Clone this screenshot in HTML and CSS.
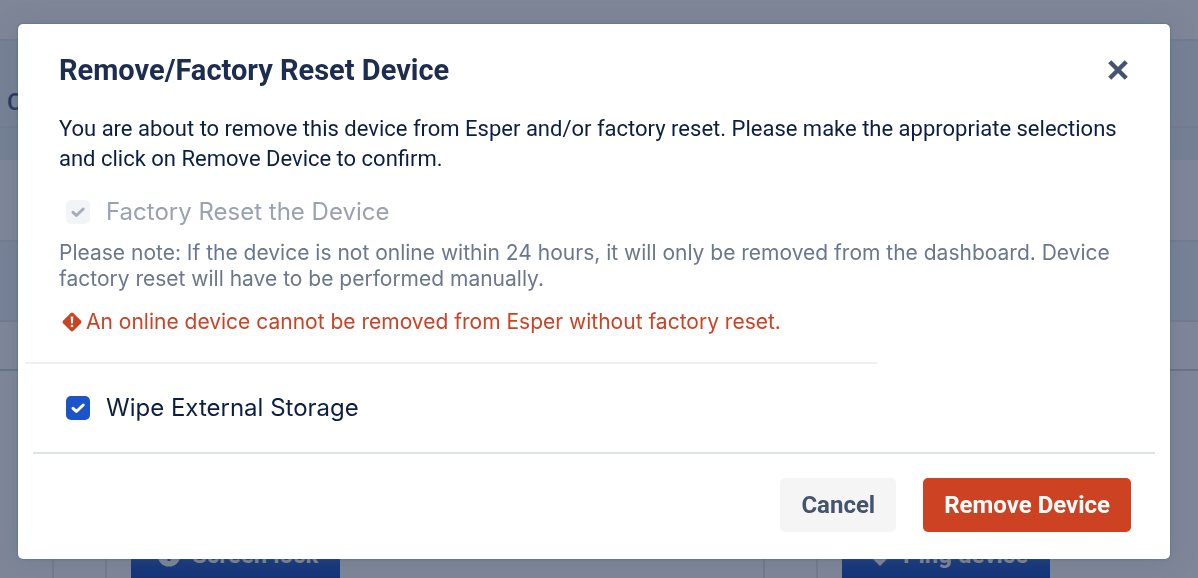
FILE: index.html
```html
<!DOCTYPE html>
<html lang="en">
<head>
<meta charset="utf-8">
<title>Remove/Factory Reset Device</title>
<link rel="stylesheet" href="styles.css">
</head>
<body>
<div class="page" aria-hidden="true">
  <div class="row row-top"></div>
  <div class="row row-heading">C</div>
  <div class="row row-tint"></div>
  <div class="row row-plain"></div>
  <div class="row row-band"></div>
  <div class="row row-gap"></div>
  <div class="cards">
    <section class="card">
      <button class="action" type="button" tabindex="-1">
        <svg class="action-icon" viewBox="0 0 24 24"><circle cx="12" cy="12" r="11.5" fill="currentColor"/><path d="M12 5v13" stroke="#16367d" stroke-width="3"/></svg>
        Screen lock
      </button>
    </section>
    <section class="card">
      <button class="action" type="button" tabindex="-1">
        <svg class="action-icon" viewBox="0 0 24 24"><path d="M12 23 1 12a6 6 0 0 1 11-8 6 6 0 0 1 11 8z" fill="currentColor"/></svg>
        Ping device
      </button>
    </section>
  </div>
</div>
<div class="backdrop">
  <div class="modal" role="dialog" aria-modal="true" aria-labelledby="title">
    <header class="modal-header">
      <h1 class="modal-title" id="title">Remove/Factory Reset Device</h1>
      <button class="close" type="button" aria-label="Close">
        <svg class="close-icon" viewBox="0 0 20 20"><path d="M2.500 2.500l15 15M17.500 2.500l-15 15" stroke="currentColor" stroke-width="4"/></svg>
      </button>
    </header>
    <div class="modal-body">
      <p class="intro">You are about to remove this device from Esper and/or factory reset. Please make the appropriate selections and click on Remove Device to confirm.</p>
      <label class="option option-disabled">
        <span class="box"><input class="check" type="checkbox" checked disabled><svg class="tick" viewBox="0 0 24 24"><path d="M7 12.300l3.400 3.200L17.200 9" /></svg></span>
        Factory Reset the Device
      </label>
      <p class="note">Please note: If the device is not online within 24 hours, it will only be removed from the dashboard. Device factory reset will have to be performed manually.</p>
      <p class="warning">
        <svg class="warning-icon" viewBox="0 0 20 20"><path d="M8.600 1.200a2 2 0 0 1 2.800 0l7.400 7.400a2 2 0 0 1 0 2.800l-7.400 7.400a2 2 0 0 1-2.800 0L1.200 11.400a2 2 0 0 1 0-2.800z" fill="currentColor"/><path d="M8.700 4.500h2.600l-.4 7H9.100z" fill="#fff"/><circle cx="10" cy="14" r="1.300" fill="#fff"/></svg>
        An online device cannot be removed from Esper without factory reset.
      </p>
    </div>
    <hr class="divider">
    <div class="modal-extra">
      <label class="option">
        <span class="box"><input class="check" type="checkbox" checked><svg class="tick" viewBox="0 0 24 24"><path d="M7 12.300l3.400 3.200L17.200 9" /></svg></span>
        Wipe External Storage
      </label>
    </div>
    <footer class="modal-footer">
      <button class="btn btn-cancel" type="button">Cancel</button>
      <button class="btn btn-danger" type="button">Remove Device</button>
    </footer>
  </div>
</div>
</body>
</html>
```
FILE: styles.css
```css
* { box-sizing: border-box; }

body {
  margin: 0;
  font-family: Inter, "Liberation Sans", sans-serif;
  color: #0b1f45;
}

.page {
  height: 100vh;
  overflow: hidden;
  background: #7f8698;
}

.row { border-bottom: 2px solid #737c8f; }
.row-top { height: 41px; }
.row-heading {
  height: 87px;
  padding: 46px 0 0 7px;
  background: #778195;
  color: #24365a;
  font: 500 24px/30px Roboto, sans-serif;
}
.row-tint { height: 32px; background: #758094; border: 0; }
.row-plain { height: 82px; }
.row-band { height: 80px; background: #778296; }
.row-gap { height: 49px; border-color: #687387; }

.cards {
  display: flex;
  gap: 51px;
  height: 260px;
  margin-left: 52px;
  padding-left: 51px;
  border-left: 2px solid #727b8e;
}
.card {
  flex: 0 0 660px;
  padding: 154px 24px 0;
  border: 2px solid #727b8e;
  border-width: 0 2px;
}
.action {
  display: flex;
  align-items: center;
  gap: 11px;
  height: 60px;
  padding: 0 22px 0 26px;
  border: 0;
  background: #14347a;
  color: #7f8698;
  font: 700 24px/30px Roboto, sans-serif;
}
.action-icon { width: 24px; height: 24px; }

.backdrop {
  position: fixed;
  inset: 0;
  padding: 24px 28px 0 18px;
}
.modal {
  padding-bottom: 27px;
  border-radius: 5px;
  background: #fff;
  box-shadow: 0 0 2px rgba(70, 86, 114, .8), 0 2px 24px rgba(80, 105, 130, .3);
}
.modal-header {
  display: flex;
  align-items: center;
  justify-content: space-between;
  padding: 30px 41px 0;
}
.modal-title {
  margin: 0;
  color: #1c2d50;
  font: 700 29px/32px Roboto, sans-serif;
}
.close {
  display: flex;
  padding: 0;
  border: 0;
  background: none;
  color: #44546f;
}
.close-icon { width: 22px; height: 22px; }

.modal-body { padding: 28px 39px 26px 41px; }
.intro {
  margin: 0 0 22px;
  font: 400 22px/30px Roboto, sans-serif;
}
.option {
  display: flex;
  align-items: center;
  gap: 16px;
  padding-left: 7px;
  font-size: 24px;
  line-height: 32px;
}
.option-disabled { color: #9aa2b1; }
.box { display: grid; }
.check, .tick { grid-area: 1 / 1; width: 24px; height: 24px; }
.check {
  margin: 0;
  appearance: none;
  border-radius: 5px;
  background: #1b54c8;
}
.check:disabled { background: #f2f4f7; }
.tick {
  fill: none;
  stroke: #fff;
  stroke-width: 3;
  stroke-linecap: round;
  stroke-linejoin: round;
  pointer-events: none;
}
.option-disabled .tick { stroke: #a5adba; }
.note {
  margin: 12px 0 16px;
  color: #6b778c;
  font-size: 21px;
  line-height: 26px;
}
.warning {
  display: flex;
  align-items: center;
  gap: 4px;
  margin: 0;
  padding-left: 3px;
  color: #cd4223;
  font-size: 21px;
  line-height: 28px;
}
.warning-icon { width: 20px; height: 20px; }
.divider {
  width: 74%;
  height: 2px;
  margin: 0 0 0 7px;
  border: 0;
  background: #f0f0f0;
}
.modal-extra { padding: 28px 41px; }
.modal-footer {
  display: flex;
  justify-content: flex-end;
  gap: 27px;
  margin: 0 15px;
  padding: 24px 24px 0;
  border-top: 2px solid #dde2e7;
}
.btn {
  padding: 12px 21px;
  border: 0;
  border-radius: 5px;
  font: 700 24px/30px Roboto, sans-serif;
}
.btn-cancel { background: #f5f5f6; color: #44546f; }
.btn-danger { background: #cd4223; color: #fff; }
```
